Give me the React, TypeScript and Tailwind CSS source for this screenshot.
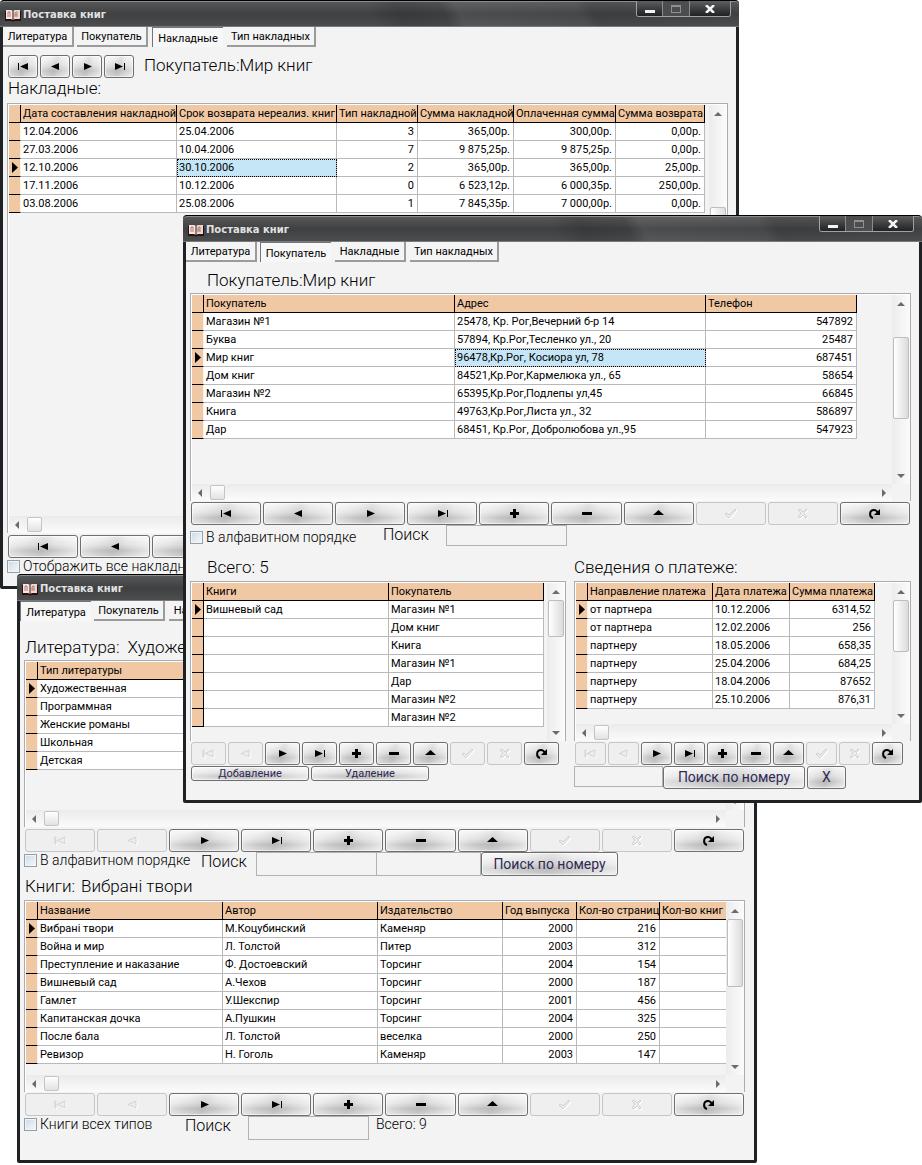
import type { ReactNode } from "react";
import clsx from "clsx";

type NavKind =
  | "first"
  | "prev"
  | "next"
  | "last"
  | "insert"
  | "delete"
  | "edit"
  | "post"
  | "cancel"
  | "refresh";

const navLabels: Record<NavKind, string> = {
  first: "Первая запись",
  prev: "Предыдущая запись",
  next: "Следующая запись",
  last: "Последняя запись",
  insert: "Вставить",
  delete: "Удалить",
  edit: "Изменить",
  post: "Сохранить",
  cancel: "Отменить",
  refresh: "Обновить",
};

const navOrder: NavKind[] = [
  "first",
  "prev",
  "next",
  "last",
  "insert",
  "delete",
  "edit",
  "post",
  "cancel",
  "refresh",
];

const tabs = ["Литература", "Покупатель", "Накладные", "Тип накладных"];

const buttonFace =
  "rounded-[3px] border border-[#6f6f6f] bg-[linear-gradient(105deg,#ffffff88_0%,#ffffff00_30%,#00000010_50%,#ffffff00_65%,#ffffff99_100%),linear-gradient(#f6f6f6,#dedede_45%,#c4c4c4_70%,#dadada)] shadow-[inset_0_0_0_1px_#ffffff88]";

function NavGlyph({ kind, disabled }: { kind: NavKind; disabled?: boolean }) {
  const shape = {
    first: <path d="M2 4h1v7h-1zM12 4v7L4 7.5z" />,
    prev: <path d="M11 4v7L3 7.5z" />,
    next: <path d="M4 4v7l8-3.5z" />,
    last: <path d="M3 4v7l8-3.5zM12 4h1v7h-1z" />,
    insert: <path d="M6 3h3v3h3v3h-3v3h-3v-3h-3v-3h3z" />,
    delete: <path d="M3 6h10v3h-10z" />,
    edit: <path d="M7.5 4l5.5 5h-11z" />,
    post: <path d="M2 8l2-1 2 2 6-6 1 1-7 8z" />,
    cancel: <path d="M3 4l2-1 3 3 3-3 1 1-3 3 3 4-1 1-3-3-3 3-2-1 3-4z" />,
    refresh: (
      <>
        <path d="M6 12C2 11 2 4 7 4C9 4 10 5 11 7" fill="none" stroke="currentColor" strokeWidth="2" />
        <path d="M13 3v6H7z" />
      </>
    ),
  }[kind];

  return (
    <svg
      viewBox="0 0 15 15"
      className={clsx(
        "h-[15px] w-[15px] shrink-0",
        disabled
          ? "fill-[#ececec] stroke-[#d2d2d2] text-[#d0d0d0] drop-shadow-[1px_1px_0_#ffffff]"
          : "fill-black text-black",
      )}
      aria-hidden="true"
    >
      {shape}
    </svg>
  );
}

function Navigator({
  kinds = navOrder,
  disabled = [],
  className,
}: {
  kinds?: NavKind[];
  disabled?: NavKind[];
  className?: string;
}) {
  return (
    <div className={clsx("flex gap-[2px]", className)}>
      {kinds.map((kind) => {
        const off = disabled.includes(kind);
        return (
          <button
            key={kind}
            type="button"
            aria-label={navLabels[kind]}
            disabled={off}
            className={clsx(
              "flex h-[23px] min-w-0 flex-1 items-center justify-center",
              off ? "rounded-[3px] border border-[#c6c6c6] bg-[#efefef]" : buttonFace,
            )}
          >
            <NavGlyph kind={kind} disabled={off} />
          </button>
        );
      })}
    </div>
  );
}

function BookIcon() {
  return (
    <svg viewBox="0 0 16 13" className="h-[13px] w-4 shrink-0" aria-hidden="true">
      <path d="M0 2h7l1 1 1-1h7v10H9l-1 1-1-1H0z" fill="#2a1010" />
      <path d="M1 1l5 0 2 1v9L6 10H1z" fill="#f3e7e2" />
      <path d="M15 1l-5 0-2 1v9l2-1h5z" fill="#ead9d3" />
      <path d="M3 3v5M3 3h2v5M10 8V4l1-1h1v5M10 6h2" fill="none" stroke="#b5746c" strokeWidth="1" />
      <path d="M8 2v9" stroke="#3b1514" strokeWidth="1" />
    </svg>
  );
}

function TitleBar() {
  return (
    <header className="flex h-[27px] items-start justify-between rounded-t-[4px] border-t border-black bg-[linear-gradient(65deg,#00000000_0%,#00000000_50%,#00000020_54%,#00000010_60%,#ffffff10_62%,#ffffff08_78%,#00000010_80%,#00000000_100%),linear-gradient(#57595b,#3e4042_50%,#4c4e50)] pl-[5px] pr-2 shadow-[inset_0_1px_0_#8a8c8e,inset_0_-1px_0_#77797b]">
      <div className="flex items-center gap-[2px] pt-[7px]">
        <BookIcon />
        <h1 className="font-['DejaVu_Sans','Noto_Sans',sans-serif] text-[10px] leading-[14px] font-bold text-[#e2e2e2]">
          Поставка книг
        </h1>
      </div>
      <div className="flex h-4 overflow-hidden rounded-b-[3px] border border-t-0 border-[#a0a2a4]">
        <button
          type="button"
          aria-label="Свернуть"
          className="flex w-[26px] items-end justify-center border-r border-[#8a8c8e] bg-linear-to-b from-[#5d5f61] to-[#202224] pb-[3px]"
        >
          <span className="h-[3px] w-[10px] bg-[#f2f2f2]" />
        </button>
        <button
          type="button"
          aria-label="Развернуть"
          disabled
          className="flex w-[27px] items-center justify-center border-r border-[#8a8c8e] bg-[#4b4d4f]"
        >
          <span className="h-[8px] w-[10px] border border-t-2 border-[#8e9092]" />
        </button>
        <button
          type="button"
          aria-label="Закрыть"
          className="flex w-[40px] items-center justify-center bg-linear-to-b from-[#5d5f61] to-[#202224]"
        >
          <svg viewBox="0 0 10 8" className="h-2 w-[10px]" aria-hidden="true">
            <path d="M1 0l8 8M9 0L1 8" stroke="#f4f4f4" strokeWidth="2.500" />
          </svg>
        </button>
      </div>
    </header>
  );
}

function TabBar({ active }: { active: number }) {
  return (
    <nav className="flex h-5 gap-1">
      {tabs.map((tab, i) => (
        <button
          key={tab}
          type="button"
          className={clsx(
            "h-5 text-[11px] leading-[17px] whitespace-nowrap",
            i === 3 ? "w-[89px]" : "w-[71px]",
            i === 0 && "-mr-px",
            i === active
              ? "border-t border-l border-[#70767c] bg-[#f7f7f7] pt-[2px]"
              : "border-r-2 border-b-2 border-[#9b9b9b] bg-[#f4f4f4]",
          )}
        >
          {tab}
        </button>
      ))}
    </nav>
  );
}

function AppWindow({
  active,
  className,
  children,
}: {
  active: number;
  className?: string;
  children: ReactNode;
}) {
  return (
    <section
      className={clsx(
        "col-start-1 row-start-1 flex min-w-0 flex-col self-start rounded-t-[5px] rounded-b-[2px] bg-[#1f2224]",
        className,
      )}
    >
      <TitleBar />
      <div className="mx-[3px] mb-[3px] bg-[#f3f3f3]">
        <TabBar active={active} />
        {children}
      </div>
    </section>
  );
}

function Arrow({ dir }: { dir: "up" | "down" | "left" | "right" }) {
  const d = {
    up: "M4 2l4 4H0z",
    down: "M0 2h8L4 6z",
    left: "M6 0v8L2 4z",
    right: "M2 0l4 4-4 4z",
  }[dir];
  return (
    <svg viewBox="0 0 8 8" className="h-2 w-2 shrink-0 fill-[#6b6b6b]" aria-hidden="true">
      <path d={d} />
    </svg>
  );
}

function VerticalBar({ thumb }: { thumb: string }) {
  return (
    <div className="flex min-h-0 flex-1 flex-col items-center bg-linear-to-r from-[#ececec] to-[#fbfbfb] pb-1">
      <div className="flex h-[17px] shrink-0 items-center">
        <Arrow dir="up" />
      </div>
      <div
        className={clsx(
          "w-4 shrink-0 rounded-[2px] border border-[#bdbdbd] bg-linear-to-r from-white to-[#dcdcdc]",
          thumb,
        )}
      />
      <div className="flex-1" />
      <Arrow dir="down" />
    </div>
  );
}

function HorizontalBar() {
  return (
    <div className="flex h-[17px] shrink-0 items-center bg-linear-to-b from-[#ebebeb] to-[#fbfbfb] px-1">
      <Arrow dir="left" />
      <div className="ml-[6px] h-[15px] w-[15px] rounded-[2px] border border-[#c4c4c4] bg-linear-to-b from-white to-[#e2e2e2]" />
      <div className="flex-1" />
      <Arrow dir="right" />
    </div>
  );
}

type Column = { title: string; width: number; right?: boolean };

function DataGrid({
  columns,
  rows,
  current,
  selectedCell,
  thumb,
  thumbGap,
  scrollX = true,
  darkRail = false,
  className,
}: {
  columns: Column[];
  rows: string[][];
  current: number;
  selectedCell?: number;
  thumb: string;
  thumbGap?: string;
  scrollX?: boolean;
  darkRail?: boolean;
  className?: string;
}) {
  const total = columns.reduce((sum, c) => sum + c.width, 12);
  return (
    <div
      className={clsx(
        "flex border-x border-t border-[#a9adb1] bg-[#f3f3f3] shadow-[inset_1px_1px_0_#ffffff]",
        className,
      )}
    >
      <div className="flex min-w-0 flex-1 flex-col overflow-hidden pt-px pl-px">
        <table
          className="table-fixed border-separate border-spacing-0 text-[11px] leading-[16px]"
          style={{ width: total }}
        >
          <colgroup>
            <col className="w-3" />
            {columns.map((c) => (
              <col key={c.title} style={{ width: c.width }} />
            ))}
          </colgroup>
          <thead>
            <tr className="h-[18px] bg-[#f1c8a4]">
              <td className="border-r border-b border-black p-0" />
              {columns.map((c) => (
                <th
                  key={c.title}
                  scope="col"
                  className="overflow-hidden border-r border-b border-black p-0 pl-[2px] text-left font-normal whitespace-nowrap"
                >
                  {c.title}
                </th>
              ))}
            </tr>
          </thead>
          <tbody>
            {rows.map((row, r) => (
              <tr key={r} className="h-[18px] bg-white">
                <td
                  className={clsx(
                    "border-r border-b border-b-black bg-[#f1c8a4] p-0",
                    darkRail ? "border-r-black" : "border-r-[#f8f3ee]",
                  )}
                >
                  {r === current && (
                    <svg viewBox="0 0 11 11" className="h-[11px] w-[11px] fill-black" aria-label="Текущая запись">
                      <path d="M3 0l6 5.500L3 11z" />
                    </svg>
                  )}
                </td>
                {columns.map((c, i) => (
                  <td
                    key={c.title}
                    className={clsx(
                      "overflow-hidden border-r border-b border-[#b9b9b9] py-0 pl-[2px] whitespace-nowrap",
                      c.right ? "pr-[3px] text-right" : "pr-0",
                      r === current &&
                        i === selectedCell &&
                        "bg-[#c5e6f6] outline-1 -outline-offset-1 outline-black outline-dotted",
                    )}
                  >
                    {row[i]}
                  </td>
                ))}
              </tr>
            ))}
          </tbody>
        </table>
        <div className="flex-1" />
        {scrollX && <HorizontalBar />}
      </div>
      <div className="flex w-[18px] shrink-0 flex-col pt-px">
        <VerticalBar thumb={clsx(thumb, thumbGap)} />
        {scrollX && <div className="h-[17px] shrink-0" />}
      </div>
    </div>
  );
}

function Caption({ children, className }: { children: ReactNode; className?: string }) {
  return (
    <p className={clsx("text-[17px] leading-[20px] font-light whitespace-pre", className)}>{children}</p>
  );
}

function CheckField({ id, label, className }: { id: string; label: string; className?: string }) {
  return (
    <div className={clsx("flex shrink-0 items-center gap-[3px]", className)}>
      <input
        id={id}
        type="checkbox"
        className="h-[13px] w-[13px] shrink-0 appearance-none border border-[#8fa0ae] bg-linear-to-br from-[#cfd9e2] to-[#f6f9fb] shadow-[inset_0_0_0_1px_#f2f5f7]"
      />
      <label htmlFor={id} className="text-[14px] leading-[16px] font-light whitespace-nowrap">
        {label}
      </label>
    </div>
  );
}

function SearchLabel({ htmlFor, className }: { htmlFor: string; className?: string }) {
  return (
    <label htmlFor={htmlFor} className={clsx("text-[16px] leading-[20px] font-light", className)}>
      Поиск
    </label>
  );
}

function TextBox({ id, label, className }: { id?: string; label?: string; className?: string }) {
  return (
    <input
      id={id}
      type="text"
      aria-label={label}
      className={clsx("min-w-0 border border-[#b2b2b2] bg-[#f3f3f3] px-1 text-[13px]", className)}
    />
  );
}

function PushButton({ children, className }: { children: ReactNode; className?: string }) {
  return (
    <button type="button" className={clsx(buttonFace, "whitespace-nowrap text-[#2f2a55]", className)}>
      {children}
    </button>
  );
}

const invoiceColumns: Column[] = [
  { title: "Дата составления накладной", width: 156 },
  { title: "Срок возврата нереализ. книг", width: 160 },
  { title: "Тип накладной", width: 81, right: true },
  { title: "Сумма накладной", width: 96, right: true },
  { title: "Оплаченная сумма", width: 102, right: true },
  { title: "Сумма возврата", width: 89, right: true },
];

const invoices = [
  ["12.04.2006", "25.04.2006", "3", "365,00р.", "300,00р.", "0,00р."],
  ["27.03.2006", "10.04.2006", "7", "9 875,25р.", "9 875,25р.", "0,00р."],
  ["12.10.2006", "30.10.2006", "2", "365,00р.", "365,00р.", "25,00р."],
  ["17.11.2006", "10.12.2006", "0", "6 523,12р.", "6 000,35р.", "250,00р."],
  ["03.08.2006", "25.08.2006", "1", "7 845,35р.", "7 000,00р.", "0,00р."],
];

const customerColumns: Column[] = [
  { title: "Покупатель", width: 251 },
  { title: "Адрес", width: 251 },
  { title: "Телефон", width: 151, right: true },
];

const customers = [
  ["Магазин №1", "25478, Кр. Рог,Вечерний б-р 14", "547892"],
  ["Буква", "57894, Кр.Рог,Тесленко ул., 20", "25487"],
  ["Мир книг", "96478,Кр.Рог, Косиора ул, 78", "687451"],
  ["Дом книг", "84521,Кр.Рог,Кармелюка ул., 65", "58654"],
  ["Магазин №2", "65395,Кр.Рог,Подлепы ул,45", "66845"],
  ["Книга", "49763,Кр.Рог,Листа ул., 32", "586897"],
  ["Дар", "68451, Кр.Рог, Добролюбова ул.,95", "547923"],
];

const orderColumns: Column[] = [
  { title: "Книги", width: 185 },
  { title: "Покупатель", width: 155 },
];

const orders = [
  ["Вишневый сад", "Магазин №1"],
  ["", "Дом книг"],
  ["", "Книга"],
  ["", "Магазин №1"],
  ["", "Дар"],
  ["", "Магазин №2"],
  ["", "Магазин №2"],
];

const paymentColumns: Column[] = [
  { title: "Направление платежа", width: 125 },
  { title: "Дата платежа", width: 77 },
  { title: "Сумма платежа", width: 85, right: true },
];

const payments = [
  ["от партнера", "10.12.2006", "6314,52"],
  ["от партнера", "12.02.2006", "256"],
  ["партнеру", "18.05.2006", "658,35"],
  ["партнеру", "25.04.2006", "684,25"],
  ["партнеру", "18.04.2006", "87652"],
  ["партнеру", "25.10.2006", "876,31"],
];

const genreColumns: Column[] = [{ title: "Тип литературы", width: 340 }];

const genres = [["Художественная"], ["Программная"], ["Женские романы"], ["Школьная"], ["Детская"]];

const bookColumns: Column[] = [
  { title: "Название", width: 185 },
  { title: "Автор", width: 155 },
  { title: "Издательство", width: 125 },
  { title: "Год выпуска", width: 74, right: true },
  { title: "Кол-во страниц", width: 83, right: true },
  { title: "Кол-во книг", width: 85, right: true },
];

const books = [
  ["Вибрані твори", "М.Коцубинский", "Каменяр", "2000", "216", ""],
  ["Война и мир", "Л. Толстой", "Питер", "2003", "312", ""],
  ["Преступление и наказание", "Ф. Достоевский", "Торсинг", "2004", "154", ""],
  ["Вишневый сад", "А.Чехов", "Торсинг", "2000", "187", ""],
  ["Гамлет", "У.Шекспир", "Торсинг", "2001", "456", ""],
  ["Капитанская дочка", "А.Пушкин", "Торсинг", "2004", "325", ""],
  ["После бала", "Л. Толстой", "веселка", "2000", "250", ""],
  ["Ревизор", "Н. Гоголь", "Каменяр", "2003", "147", ""],
];

function InvoicesWindow() {
  return (
    <AppWindow active={2} className="mr-[183px]">
      <div className="pr-2 pb-3 pl-1">
        <div className="flex pt-2 pl-px">
          <Navigator kinds={["first", "prev", "next", "last"]} className="w-[126px]" />
          <Caption className="pl-[10px]">Покупатель:Мир книг</Caption>
        </div>
        <Caption className="h-[25px] pl-px">Накладные:</Caption>
        <DataGrid
          columns={invoiceColumns}
          rows={invoices}
          current={2}
          selectedCell={1}
          thumb="h-[160px]"
          thumbGap="mt-[85px]"
          className="min-h-[430px]"
        />
        <Navigator className="px-px pt-[2px]" />
        <CheckField id="all-invoices" label="Отображить все накладные" />
      </div>
    </AppWindow>
  );
}

function LiteratureWindow() {
  return (
    <AppWindow active={0} className="mt-[574px] mr-[165px] ml-[17px]">
      <div className="pr-[9px] pb-5 pl-1">
        <div className="flex h-[39px] items-end gap-2 pb-[3px] pl-px">
          <Caption>Литература:</Caption>
          <Caption>Художественная</Caption>
        </div>
        <DataGrid columns={genreColumns} rows={genres} current={0} thumb="h-[60px]" className="min-h-[167px]" />
        <Navigator disabled={["first", "prev", "post", "cancel"]} className="px-px pt-[2px]" />
        <div className="flex h-6 items-start">
          <CheckField id="genres-sorted" label="В алфавитном порядке" className="w-[177px]" />
          <SearchLabel htmlFor="genre-search" className="w-[55px]" />
          <TextBox id="genre-search" className="h-6 w-[121px]" />
          <TextBox label="Номер" className="-ml-px h-6 w-[105px]" />
          <PushButton className="h-6 w-[137px] text-[14px]">Поиск по номеру</PushButton>
        </div>
        <div className="flex h-6 gap-[6px] pl-px">
          <Caption>Книги:</Caption>
          <Caption>Вибрані твори</Caption>
        </div>
        <DataGrid columns={bookColumns} rows={books} current={0} thumb="h-[68px]" className="min-h-[192px]" />
        <Navigator disabled={["first", "prev", "post", "cancel"]} className="px-px pt-px" />
        <div className="flex items-start">
          <CheckField id="all-types" label="Книги всех типов" className="w-[161px]" />
          <SearchLabel htmlFor="book-search" className="w-[63px]" />
          <TextBox id="book-search" className="h-6 w-[121px]" />
          <p className="pl-[7px] text-[14px] leading-4 font-light">Всего: 9</p>
        </div>
      </div>
    </AppWindow>
  );
}

function CustomersWindow() {
  return (
    <AppWindow active={1} className="mt-[215px] ml-[183px]">
      <div className="pr-2 pb-[11px] pl-1">
        <Caption className="h-[31px] pt-2 pl-[17px]">Покупатель:Мир книг</Caption>
        <DataGrid
          columns={customerColumns}
          rows={customers}
          current={2}
          selectedCell={1}
          thumb="h-[82px]"
          thumbGap="mt-[25px]"
          className="min-h-[208px]"
        />
        <Navigator disabled={["post", "cancel"]} className="px-px pt-px" />
        <div className="flex h-[21px] items-start">
          <CheckField id="customers-sorted" label="В алфавитном порядке" className="w-[193px] pt-1" />
          <SearchLabel htmlFor="customer-search" className="w-[63px]" />
          <TextBox id="customer-search" className="h-[21px] w-[121px]" />
        </div>
        <div className="grid grid-cols-[376fr_337fr] gap-x-2">
          <div className="min-w-0">
            <Caption className="h-[35px] pt-[11px] pl-[17px]">Всего: 5</Caption>
            <DataGrid
              columns={orderColumns}
              rows={orders}
              current={0}
              thumb="h-[37px]"
              scrollX={false}
              darkRail
              className="min-h-[160px]"
            />
            <Navigator disabled={["first", "prev", "post", "cancel"]} className="pt-px pr-[7px] pl-px" />
            <div className="flex gap-[2px] pt-px pl-px">
              <PushButton className="h-[15px] w-[118px] text-[11px] leading-[13px]">Добавление</PushButton>
              <PushButton className="h-[15px] w-[118px] text-[11px] leading-[13px]">Удаление</PushButton>
            </div>
          </div>
          <div className="min-w-0">
            <Caption className="h-[35px] pt-[11px]">Сведения о платеже:</Caption>
            <DataGrid
              columns={paymentColumns}
              rows={payments}
              current={0}
              thumb="h-[52px]"
              className="min-h-[160px]"
            />
            <Navigator disabled={["first", "prev", "post", "cancel"]} className="pt-px pr-2 pl-px" />
            <div className="flex items-start pt-px">
              <TextBox label="Номер платежа" className="h-[21px] w-[89px]" />
              <PushButton className="h-[23px] w-[142px] text-[14px]">Поиск по номеру</PushButton>
              <PushButton className="ml-[2px] h-[23px] w-[39px] text-[14px]">X</PushButton>
            </div>
          </div>
        </div>
      </div>
    </AppWindow>
  );
}

export default function App() {
  return (
    <main className="grid min-h-screen grid-cols-1 overflow-hidden bg-white font-[Roboto,'Liberation_Sans',sans-serif] text-black">
      <InvoicesWindow />
      <LiteratureWindow />
      <CustomersWindow />
    </main>
  );
}
